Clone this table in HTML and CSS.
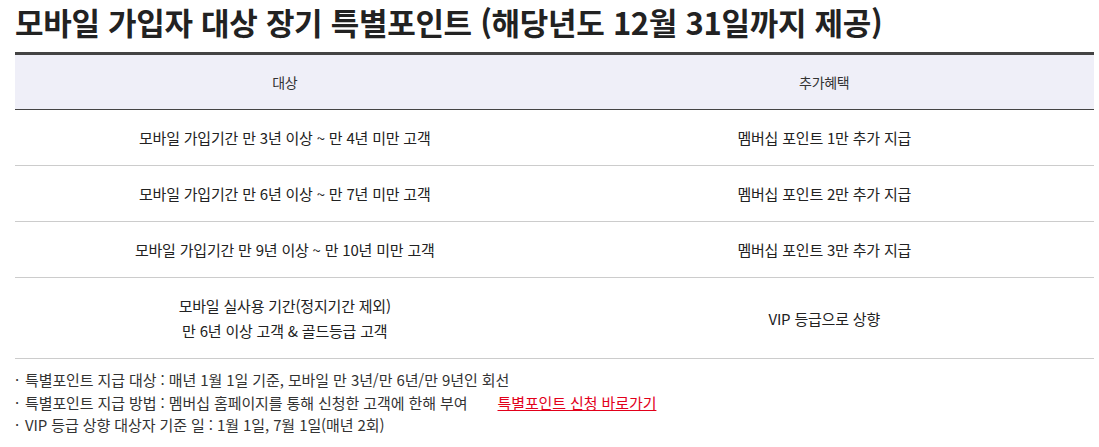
FILE: index.html
```html
<!DOCTYPE html>
<html lang="ko">
<head>
<meta charset="utf-8">
<link rel="stylesheet" href="styles.css">
</head>
<body>
<div class="wrap">
  <h2 class="title">모바일 가입자 대상 장기 특별포인트 (해당년도 12월 31일까지 제공)</h2>
  <table class="tbl">
    <thead>
      <tr><th>대상</th><th>추가혜택</th></tr>
    </thead>
    <tbody>
      <tr><td>모바일 가입기간 만 3년 이상 ~ 만 4년 미만 고객</td><td>멤버십 포인트 1만 추가 지급</td></tr>
      <tr><td>모바일 가입기간 만 6년 이상 ~ 만 7년 미만 고객</td><td>멤버십 포인트 2만 추가 지급</td></tr>
      <tr><td>모바일 가입기간 만 9년 이상 ~ 만 10년 미만 고객</td><td>멤버십 포인트 3만 추가 지급</td></tr>
      <tr class="tall"><td>모바일 실사용 기간(정지기간 제외)<br>만 6년 이상 고객 &amp; 골드등급 고객</td><td>VIP 등급으로 상향</td></tr>
    </tbody>
  </table>
  <ul class="notes">
    <li>특별포인트 지급 대상 : 매년 1월 1일 기준, 모바일 만 3년/만 6년/만 9년인 회선</li>
    <li>특별포인트 지급 방법 : 멤버십 홈페이지를 통해 신청한 고객에 한해 부여 <a class="link" href="#">특별포인트 신청 바로가기</a></li>
    <li>VIP 등급 상향 대상자 기준 일 : 1월 1일, 7월 1일(매년 2회)</li>
  </ul>
</div>
</body>
</html>
```

FILE: styles.css
```css
* { box-sizing: border-box; }
html, body { margin: 0; padding: 0; background: #fff; }
body {
  font-family: "Noto Sans CJK KR", "Noto Sans", sans-serif;
  color: #222;
}
.wrap { padding: 0 5px 0 15px; }
.title {
  margin: 0;
  padding-top: 2px;
  font-size: 31px;
  line-height: 40px;
  font-weight: 700;
  letter-spacing: -0.3px;
  color: #222;
}
.tbl {
  width: 100%;
  margin-top: 10px;
  border-collapse: collapse;
  table-layout: fixed;
  border-top: 3px solid #444;
}
.tbl th {
  background: #efeff8;
  height: 56px;
  font-weight: 400;
  font-size: 14px;
  color: #333;
  border-bottom: 1px solid #444;
  letter-spacing: -0.3px;
}
.tbl td {
  height: 56px;
  text-align: center;
  font-size: 15px;
  color: #222;
  border-bottom: 1px solid #ccc;
  letter-spacing: -0.2px;
  line-height: 25px;
}
.tbl tr.tall td { height: 81px; }
.notes {
  list-style: none;
  margin: 10px 0 0;
  padding: 0;
  font-size: 15px;
  line-height: 22.5px;
  color: #333;
  letter-spacing: -0.1px;
}
.notes li { position: relative; padding-left: 10px; }
.notes li::before {
  content: "·";
  position: absolute;
  left: 0;
  top: 0;
}
.link {
  color: #e2001a;
  text-decoration: underline;
  margin-left: 26px;
}
```
